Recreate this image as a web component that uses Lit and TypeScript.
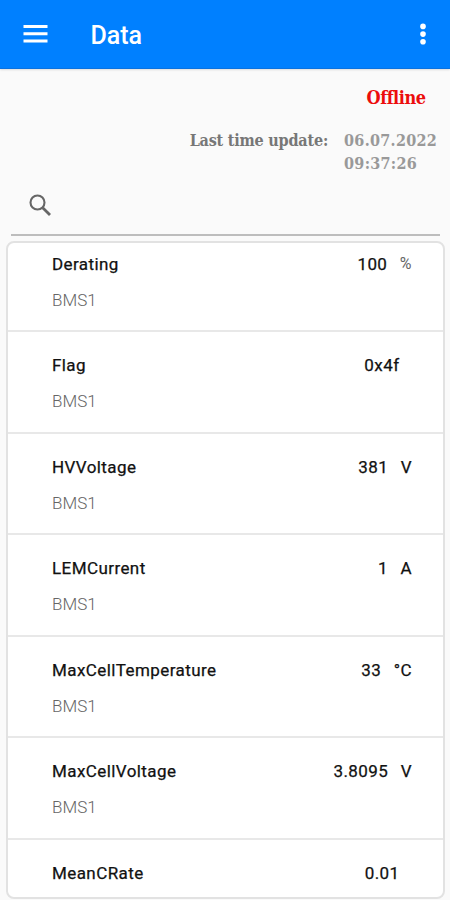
import { LitElement, html, css, nothing } from "lit";
import { customElement, property } from "lit/decorators.js";

interface Reading {
  name: string;
  source?: string;
  value: string;
  unit: string;
}

const READINGS: Reading[] = [
  { name: "Derating", source: "BMS1", value: "100", unit: "%" },
  { name: "Flag", source: "BMS1", value: "0x4f", unit: "" },
  { name: "HVVoltage", source: "BMS1", value: "381", unit: "V" },
  { name: "LEMCurrent", source: "BMS1", value: "1", unit: "A" },
  { name: "MaxCellTemperature", source: "BMS1", value: "33", unit: "°C" },
  { name: "MaxCellVoltage", source: "BMS1", value: "3.8095", unit: "V" },
  { name: "MeanCRate", value: "0.01", unit: "" },
];

@customElement("reading-row")
export class ReadingRow extends LitElement {
  @property({ attribute: false }) reading!: Reading;

  static styles = css`
    :host {
      display: block;
      flex: none;
      box-sizing: border-box;
      height: 101.45px;
      padding: 22px 31px 0 44px;
      border-bottom: 2px solid #e8e8e8;
    }
    .line {
      display: flex;
      justify-content: space-between;
      height: 22px;
      font-size: 17px;
      line-height: 22px;
      letter-spacing: 0.42px;
      color: #111;
      -webkit-text-stroke: 0.25px #111;
      white-space: pre;
    }
    .figures {
      display: flex;
      gap: 12.5px;
    }
    .percent {
      font-size: 16px;
      color: #666;
      -webkit-text-stroke: 0;
    }
    .source {
      margin-top: 14px;
      font-size: 17px;
      line-height: 22px;
      font-weight: 300;
      color: #666;
    }
  `;

  render() {
    const { name, source, value, unit } = this.reading;
    return html`
      <div class="line">
        <span class="name">${name}</span>
        <span class="figures"
          ><span>${value}</span><span class=${unit === "%" ? "percent" : "unit"}>${unit}</span></span
        >
      </div>
      ${source ? html`<div class="source">${source}</div>` : nothing}
    `;
  }
}

@customElement("app-root")
export class AppRoot extends LitElement {
  static styles = css`
    :host {
      display: flex;
      flex-direction: column;
      box-sizing: border-box;
      height: 900px;
      overflow: hidden;
      background: #fafafa;
      font-family: Roboto, "Liberation Sans", sans-serif;
    }
    .bar {
      flex: none;
      display: flex;
      align-items: center;
      box-sizing: border-box;
      height: 69px;
      padding: 0 18px 0 23px;
      background: #0080ff;
      border-bottom: 1px solid #0a72e0;
      color: #fff;
      box-shadow: 0 1px 2px rgba(0, 0, 0, 0.12);
    }
    .title {
      flex: 1;
      margin-left: 42.5px;
      font-size: 25px;
      font-weight: 500;
      line-height: 30px;
      padding-top: 4px;
    }
    svg {
      display: block;
      flex: none;
    }
    .status {
      flex: none;
      height: 116px;
      box-sizing: border-box;
      padding: 17px 0 0;
      font-family: "DejaVu Serif Condensed", "DejaVu Serif", serif;
      font-stretch: condensed;
      font-weight: 700;
    }
    .state {
      padding-right: 24.5px;
      text-align: right;
      font-size: 18px;
      line-height: 24px;
      letter-spacing: -0.5px;
      color: #ec0c0c;
    }
    .update {
      display: flex;
      justify-content: flex-end;
      margin-top: 19px;
      font-size: 16px;
      line-height: 23px;
      letter-spacing: -0.2px;
      color: #777;
    }
    .label {
      white-space: nowrap;
    }
    .stamp {
      width: 106px;
      margin-left: 16px;
      letter-spacing: 0.3px;
      color: #999;
    }
    .search {
      flex: none;
      box-sizing: border-box;
      height: 51px;
      margin: 0 10px 0 11px;
      padding: 9px 0 0 18px;
      border-bottom: 2px solid #bdbdbd;
    }
    .list {
      flex: none;
      box-sizing: border-box;
      height: 658px;
      margin: 5px 5px 0 6px;
      border: 2px solid #e2e2e2;
      border-radius: 8px;
      background: #fff;
      overflow: hidden;
    }
    .scroller {
      display: flex;
      flex-direction: column;
      margin-top: -12px;
    }
  `;

  render() {
    return html`
      <header class="bar">
        <svg width="25" height="18" viewBox="0 0 25 18" fill="#fff">
          <path d="M0.5 0h24v3h-24zM0.5 7.3h24v3h-24zM0.5 14.5h24v3h-24z" />
        </svg>
        <div class="title">Data</div>
        <svg width="18" height="22" viewBox="0 0 18 22" fill="#fff">
          <circle cx="9" cy="3.4" r="2.8" />
          <circle cx="9" cy="11.1" r="2.8" />
          <circle cx="9" cy="18.8" r="2.8" />
        </svg>
      </header>
      <section class="status">
        <div class="state">Offline</div>
        <div class="update">
          <div class="label">Last time update:</div>
          <div class="stamp">06.07.2022<br />09:37:26</div>
        </div>
      </section>
      <div class="search">
        <svg width="23" height="23" viewBox="0 0 23 23" fill="none" stroke="#666">
          <circle cx="8.5" cy="8.5" r="7" stroke-width="2.1" />
          <path d="M13.7 13.7L21 21" stroke-width="2.8" />
        </svg>
      </div>
      <main class="list">
        <div class="scroller">
          ${READINGS.map((r) => html`<reading-row .reading=${r}></reading-row>`)}
        </div>
      </main>
    `;
  }
}
